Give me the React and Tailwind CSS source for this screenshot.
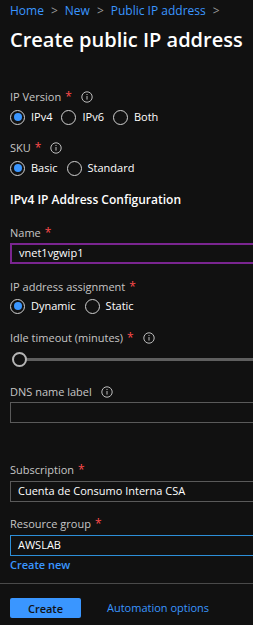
import React from 'react';

const Info = () => (
  <svg width="12" height="12" viewBox="0 0 12 12" className="ml-[9px] shrink-0">
    <circle cx="6" cy="6" r="5.2" fill="none" stroke="#bdbdbd" strokeWidth="1" />
    <rect x="5.5" y="5" width="1" height="3.6" fill="#bdbdbd" />
    <rect x="5.5" y="3" width="1" height="1" fill="#bdbdbd" />
  </svg>
);

const Label = ({ children, required, info, className = '' }) => (
  <div className={`flex items-center h-4 leading-4 text-[11px] text-[#c6c6c6] ${className}`}>
    <span>{children}</span>
    {required && <span className="text-[#ff4b4b] ml-[4px] text-[12px]">*</span>}
    {info && <Info />}
  </div>
);

const Radio = ({ label, checked }) => (
  <div className="flex items-center mr-[9px]">
    <span className="w-[15px] h-[15px] rounded-full border border-[#d0d0d0] flex items-center justify-center">
      {checked && <span className="w-[8px] h-[8px] rounded-full bg-[#3a96ff]" />}
    </span>
    <span className="ml-[6px] text-white">{label}</span>
  </div>
);

const RadioRow = ({ items, className = '' }) => (
  <div className={`flex items-center h-[18px] text-[11px] ${className}`}>
    {items.map((it, i) => (
      <Radio key={it} label={it} checked={i === 0} />
    ))}
  </div>
);

const Field = ({ value, border = 'border-[#5a5a5a]', className = '' }) => (
  <div
    className={`w-[260px] h-[21px] border ${border} flex items-center pl-[7px] text-[11px] text-white ${className}`}
  >
    {value}
  </div>
);

export default function App() {
  return (
    <div
      className="w-full h-[625px] bg-[#111111] overflow-hidden"
      style={{ fontFamily: '"Open Sans", "Noto Sans", sans-serif' }}
    >
      <div className="pl-[10px]">
        <div className="pt-[3px] h-[19px] flex items-center gap-[7px] text-[12px] leading-4 text-[#3a96ff]">
          <span>Home</span>
          <span className="text-[#9a9a9a]">&gt;</span>
          <span>New</span>
          <span className="text-[#9a9a9a]">&gt;</span>
          <span>Public IP address</span>
          <span className="text-[#9a9a9a]">&gt;</span>
        </div>
        <h1 className="mt-[7px] h-[28px] leading-[28px] text-[20px] font-semibold text-white">
          Create public IP address
        </h1>

        <Label required info className="mt-[35px]">IP Version</Label>
        <RadioRow items={['IPv4', 'IPv6', 'Both']} className="mt-[3px]" />

        <Label required info className="mt-[14px]">SKU</Label>
        <RadioRow items={['Basic', 'Standard']} className="mt-[3px]" />

        <div className="mt-[14px] h-[18px] leading-[18px] text-[12px] font-semibold text-white">
          IPv4 IP Address Configuration
        </div>

        <Label required className="mt-[16px]">Name</Label>
        <Field value="vnet1vgwip1" border="border-2 border-[#7a2590]" className="mt-[2px]" />

        <Label required className="mt-[15px]">IP address assignment</Label>
        <RadioRow items={['Dynamic', 'Static']} className="mt-[2px]" />

        <Label required info className="mt-[15px]">Idle timeout (minutes)</Label>
        <div className="mt-[5px] h-4 flex items-center w-[260px]">
          <span className="w-[15px] h-[15px] rounded-full border-2 border-[#b5b5b5] bg-[#111111] shrink-0 ml-[2px] z-10" />
          <span className="flex-1 h-[3px] bg-[#5f5f5f] -ml-px" />
        </div>

        <Label info className="mt-[17px]">DNS name label</Label>
        <Field value="" className="mt-[2px]" />

        <Label required className="mt-[39px]">Subscription</Label>
        <Field value="Cuenta de Consumo Interna CSA" className="mt-[3px]" />

        <Label required className="mt-[14px]">Resource group</Label>
        <Field value="AWSLAB" border="border-[#2d8fd8]" className="mt-[3px]" />
        <div className="mt-px h-4 leading-4 text-[11px] font-semibold text-[#3a96ff]">Create new</div>
      </div>

      <div className="mt-[10px] h-px bg-[#4a4a4a]" />

      <div className="pl-[10px] mt-[14px] flex items-center">
        <button className="w-[71px] h-[20px] bg-[#3a96ff] rounded-[2px] text-[11px] font-semibold text-[#111111] leading-none">
          Create
        </button>
        <span className="ml-[26px] text-[11px] text-[#3a96ff]">Automation options</span>
      </div>
    </div>
  );
}
